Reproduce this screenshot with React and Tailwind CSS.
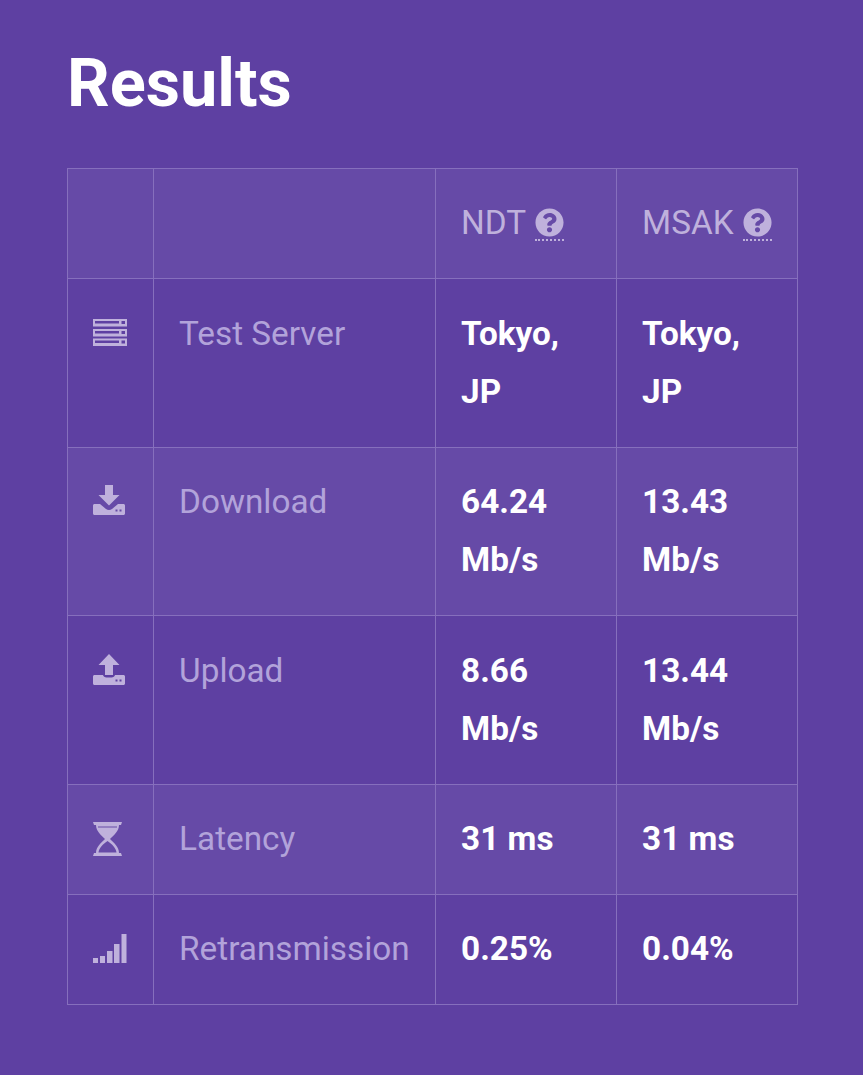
import { FaQuestionCircle } from 'react-icons/fa';

function ServerIcon() {
  return (
    <svg width="34" height="27" viewBox="0 0 34 27" className="block mt-[3px]" fill="currentColor">
      <path fillRule="evenodd" d="M0 0h34v7.500H0zM2 2v2.500h24V2zM28.500 2v3H32V2zM0 10h34v7.500H0zM2 12v2.500h24V12zM28.500 12v3H32v-3zM0 19.500h34V27H0zM2 21.500V24h24v-2.500zM28.500 21.500v3H32v-3z" />
    </svg>
  );
}

function DownloadIcon() {
  return (
    <svg width="32" height="30" viewBox="0 0 32 30" className="block" fill="currentColor">
      <path d="M12 0h8v10h6.500L16 20.500 5.500 10H12z" />
      <path fillRule="evenodd" d="M1.500 19H7l6 5c1.800 1.300 4.200 1.300 6 0l6-5h5.500c.8 0 1.500.7 1.500 1.500v8c0 .8-.7 1.500-1.500 1.500h-29C.7 30 0 29.300 0 28.500v-8C0 19.700.7 19 1.500 19zM22.500 24.500v2h2v-2zM26.500 24.500v2h2v-2z" />
    </svg>
  );
}

function UploadIcon() {
  return (
    <svg width="32" height="31" viewBox="0 0 32 31" className="block mt-[1px]" fill="currentColor">
      <path d="M16 0l10.500 11H20v10h-8V11H5.500z" />
      <path fillRule="evenodd" d="M1.500 21H10c.3 1.500 1.800 2.500 3.500 2.500h5c1.700 0 3.200-1 3.500-2.500h8.500c.8 0 1.500.7 1.500 1.500v7c0 .8-.7 1.500-1.500 1.500h-29C.7 31 0 30.300 0 29.500v-7C0 21.700.7 21 1.500 21zM22.500 25.500v2h2v-2zM26.500 25.500v2h2v-2z" />
    </svg>
  );
}

function HourglassIcon() {
  return (
    <svg width="29" height="34" viewBox="0 0 29 34" className="block" fill="currentColor">
      <path d="M0 0h29l-1 3H1zM1 31h27l1 3H0z" />
      <path fillRule="evenodd" d="M3 3h23c0 6-5 10-9 14 4 4 9 8 9 14H3c0-6 5-10 9-14C8 13 3 9 3 3zM5 4.500v1h19v-1zM14.500 19C10 22 6 26 5.500 30.500h18C23 26 19 22 14.500 19z" />
    </svg>
  );
}

function SignalIcon() {
  return (
    <svg width="34" height="29" viewBox="0 0 34 29" className="block mt-[2px]" fill="currentColor">
      <path d="M0 24h5v5H0zM7 22h5v7H7zM14 17h5.500v12H14zM21 10h5.500v19H21zM28.500 0h5v29h-5z" />
    </svg>
  );
}

function Help() {
  return (
    <span className="inline-block align-middle border-b-2 border-dotted border-[#bfb1dc] pb-[2px] ml-[9px] -mt-[2px]">
      <FaQuestionCircle className="block text-[29px]" />
    </span>
  );
}

const rows = [
  { icon: <ServerIcon />, label: 'Test Server', ndt: 'Tokyo, JP', msak: 'Tokyo, JP', alt: false },
  { icon: <DownloadIcon />, label: 'Download', ndt: '64.24 Mb/s', msak: '13.43 Mb/s', alt: true },
  { icon: <UploadIcon />, label: 'Upload', ndt: '8.66 Mb/s', msak: '13.44 Mb/s', alt: false },
  { icon: <HourglassIcon />, label: 'Latency', ndt: '31 ms', msak: '31 ms', alt: true },
  { icon: <SignalIcon />, label: 'Retransmission', ndt: '0.25%', msak: '0.04%', alt: false },
];

export default function App() {
  return (
    <div className="min-h-[1075px] bg-[#5e40a2] px-[67px] pt-[40px] font-['Roboto',sans-serif] text-white">
      <h1 className="text-[66.700px] leading-[86px] font-bold mb-[42px]">Results</h1>
      <table className="w-[729.600px] table-fixed border-collapse text-[33.300px] leading-[58.300px]">
        <colgroup>
          <col className="w-[85.600px]" />
          <col className="w-[282px]" />
          <col className="w-[181px]" />
          <col className="w-[181px]" />
        </colgroup>
        <thead>
          <tr className="bg-white/5 text-[#bfb1dc]">
            <th className="border border-[#866fbd] px-[25px] py-[25.450px]"></th>
            <th className="border border-[#866fbd] px-[25px] py-[25.450px]"></th>
            <th className="border border-[#866fbd] px-[25.500px] py-[25.450px] font-normal text-left whitespace-nowrap">NDT<Help /></th>
            <th className="border border-[#866fbd] pl-[25.500px] pr-0 py-[25.450px] font-normal text-left whitespace-nowrap">MSAK<Help /></th>
          </tr>
        </thead>
        <tbody>
          {rows.map((r) => (
            <tr key={r.label} className={r.alt ? 'bg-white/5' : ''}>
              <td className="border border-[#866fbd] pl-[25px] pt-[37px] align-top text-[#bfb1dc]">{r.icon}</td>
              <td className="border border-[#866fbd] px-[25.500px] py-[25.450px] align-top text-[#b2a3da] whitespace-nowrap">{r.label}</td>
              <td className="border border-[#866fbd] px-[25.500px] py-[25.450px] align-top font-bold">{r.ndt}</td>
              <td className="border border-[#866fbd] px-[25.500px] py-[25.450px] align-top font-bold">{r.msak}</td>
            </tr>
          ))}
        </tbody>
      </table>
    </div>
  );
}
